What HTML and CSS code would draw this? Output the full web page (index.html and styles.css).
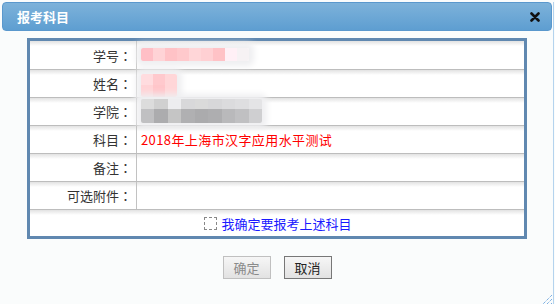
FILE: index.html
```html
<html lang="zh-CN">

<head>
    <meta charset="UTF-8">
    <meta name="viewport" content="width=device-width, initial-scale=1.0">
    <title>报考科目</title>
    <link rel="stylesheet" href="styles.css">
</head>

<body>
    <div class="dialog">
        <div class="titlebar">
            <span class="title">报考科目</span>
            <svg class="close" width="10" height="10" viewBox="0 0 10 10">
                <path d="M1.5 1.5 L8.5 8.5 M8.5 1.5 L1.5 8.5" stroke="#111" stroke-width="2.6" stroke-linecap="round"/>
            </svg>
        </div>

        <div class="content">
            <div class="form">
                <div class="row">
                    <div class="label">学号<span class="colon">：</span></div>
                    <div class="value"><div class="mosaic mosaic-id"></div></div>
                </div>
                <div class="row">
                    <div class="label">姓名<span class="colon">：</span></div>
                    <div class="value"><div class="mosaic mosaic-name"></div></div>
                </div>
                <div class="row">
                    <div class="label">学院<span class="colon">：</span></div>
                    <div class="value"><div class="mosaic mosaic-school"></div></div>
                </div>
                <div class="row">
                    <div class="label">科目<span class="colon">：</span></div>
                    <div class="value subject">2018年上海市汉字应用水平测试</div>
                </div>
                <div class="row">
                    <div class="label">备注<span class="colon">：</span></div>
                    <div class="value"></div>
                </div>
                <div class="row">
                    <div class="label">可选附件<span class="colon">：</span></div>
                    <div class="value"></div>
                </div>
                <div class="row confirm-row">
                    <label class="confirm"><span class="check"></span>我确定要报考上述科目</label>
                </div>
            </div>

            <div class="buttons">
                <button class="btn" disabled>确定</button>
                <button class="btn">取消</button>
            </div>
        </div>

        <svg class="grip" width="14" height="14" viewBox="0 0 14 14">
            <path d="M13 3 L3 13 M13 7 L7 13 M13 11 L11 13" stroke="#4a90d8" stroke-width="1" stroke-dasharray="1 1"/>
        </svg>
    </div>
</body>

</html>
```

FILE: styles.css
```css
body {
    margin: 0;
    background: #fafcfc;
    font-family: "Noto Sans CJK SC", "Microsoft YaHei", sans-serif;
    font-size: 13px;
    color: #333;
}

.dialog {
    position: relative;
    width: 553px;
    height: 304px;
    border-right: 1px solid #b4d3ee;
}

.titlebar {
    display: flex;
    align-items: center;
    justify-content: space-between;
    height: 29px;
    margin: 2px 1px 0 2px;
    padding: 0 11px 0 14px;
    box-sizing: border-box;
    border: 1px solid #5a98cd;
    border-radius: 4px;
    background: linear-gradient(#7db2da, #5e9ed1);
}

.title {
    color: #fff;
    font-weight: bold;
    font-size: 13px;
}

.close {
    display: block;
}

.content {
    padding: 7px 0 0 27px;
}

.form {
    width: 494px;
    border: 3px solid #6088b0;
    background: #fff;
}

.row {
    display: grid;
    grid-template-columns: 107px 1fr;
    height: 28px;
    box-sizing: border-box;
    border-top: 1px solid #bdbdbd;
    background: linear-gradient(#e2e2e2, #fff 5px);
}

.row:first-child {
    border-top: 0;
}

.label {
    display: flex;
    align-items: center;
    justify-content: flex-end;
    padding-right: 4px;
    border-right: 1px solid #c2c2c2;
}

.colon {
    font-family: "Noto Sans CJK TC", sans-serif;
}

.value {
    display: flex;
    align-items: center;
    padding-left: 4px;
}

.subject {
    color: #ff0000;
    letter-spacing: 0.4px;
}

.mosaic {
    box-shadow: 0 0 6px 5px #efeff1;
    border-radius: 2px;
}

.mosaic-id {
    width: 108px;
    height: 13px;
    margin-top: -1px;
    background: linear-gradient(to right,
        #ffbfc6 0 12px, #ffd3d6 12px 24px, #ffc2c6 24px 36px,
        #ffc9cc 36px 48px, #ffd6d8 48px 60px, #ffd0d3 60px 72px,
        #ffc2c6 72px 84px, #fff0f6 84px 96px, #f6f2f4 96px 108px);
}

.mosaic-name {
    width: 36px;
    height: 23px;
    margin-top: 4px;
    background:
        linear-gradient(to right, #ffdcdf 0 12px, #ffc9cd 12px 24px, #ffd6d8 24px 36px) top / 36px 11px no-repeat,
        linear-gradient(to right, #ffd3d6 0 12px, #ffc6ca 12px 24px, #ffd6d8 24px 36px) bottom / 36px 12px no-repeat;
}

.mosaic-school {
    width: 121px;
    height: 24px;
    margin-top: -2px;
    background:
        linear-gradient(to right, #dcdcdc 0 13px, #d0d0d0 13px 27px, #ededef 27px 40px, #d8d8da 40px 54px, #dadada 54px 67px, #d7d7d9 67px 81px, #dbdbdd 81px 94px, #dedee0 94px 108px, #e4e4e6 108px 121px) top / 121px 10px no-repeat,
        linear-gradient(to right, #c0c0c2 0 13px, #acacae 13px 27px, #c5c5c5 27px 40px, #b0b0b2 40px 54px, #ababad 54px 67px, #aeaeb0 67px 81px, #b9b9bb 81px 94px, #c0c0c2 94px 108px, #cfcfd1 108px 121px) bottom / 121px 14px no-repeat;
}

.confirm-row {
    display: flex;
    justify-content: center;
    align-items: center;
    height: 27px;
}

.confirm {
    display: flex;
    align-items: center;
    color: #1a1aff;
    margin-left: 2px;
}

.check {
    width: 11px;
    height: 11px;
    margin-right: 4px;
    border: 1px dashed #888;
}

.buttons {
    display: flex;
    justify-content: center;
    gap: 13px;
    width: 500px;
    margin-top: 17px;
}

.btn {
    width: 48px;
    height: 23px;
    padding: 0;
    font-family: inherit;
    font-size: 13px;
    color: #222;
    border: 1px solid #777;
    background: linear-gradient(#f6f6f6, #e2e2e2);
}

.btn:disabled {
    color: #8a8a8a;
    border-color: #c0c0c0;
}

.grip {
    position: absolute;
    right: 0;
    bottom: 0;
}
```
